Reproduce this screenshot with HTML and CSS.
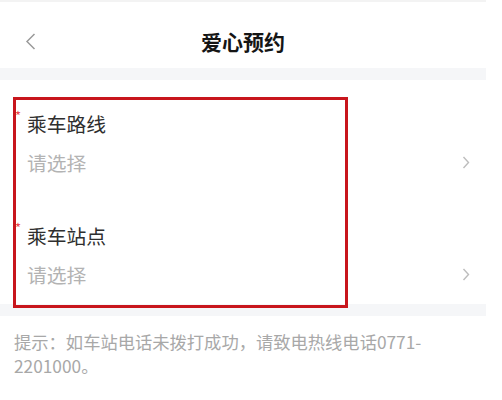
FILE: index.html
```html
<!DOCTYPE html>
<html lang="zh-CN">
<head>
  <meta charset="UTF-8" />
  <meta name="viewport" content="width=device-width, initial-scale=1.0">
  <title>爱心预约</title>
  <link rel="stylesheet" href="styles.css">
</head>

<body>
  <div class="page">
    <div class="header">
      <div class="back">
        <svg width="11" height="17" viewBox="0 0 11 17">
          <polyline points="9.5,1 2,8.5 9.5,16" fill="none" stroke="#9a9a9a" stroke-width="1.5" />
        </svg>
      </div>
      <h2 class="titulo">爱心预约</h2>
      <div></div>
    </div>

    <div class="separador"></div>

    <div class="form">
      <div class="campo">
        <div class="etiqueta"><span class="req">*</span>乘车路线</div>
        <div class="valor">
          <span>请选择</span>
          <svg width="8" height="13" viewBox="0 0 8 13">
            <polyline points="1.5,1 6.5,6.5 1.5,12" fill="none" stroke="#bdbdbd" stroke-width="1.4" />
          </svg>
        </div>
      </div>
      <div class="campo">
        <div class="etiqueta"><span class="req">*</span>乘车站点</div>
        <div class="valor">
          <span>请选择</span>
          <svg width="8" height="13" viewBox="0 0 8 13">
            <polyline points="1.5,1 6.5,6.5 1.5,12" fill="none" stroke="#bdbdbd" stroke-width="1.4" />
          </svg>
        </div>
      </div>
      <div class="marca"></div>
    </div>

    <div class="separador"></div>

    <p class="aviso">提示：如车站电话未拨打成功，请致电热线电话0771-<wbr>2201000。</p>
  </div>
</body>
</html>
```

FILE: styles.css
```css
body {
  background-color: white;
  font-family: "Noto Sans CJK SC", "Noto Sans", sans-serif;
  margin: 0;
  padding: 0;
}

.page {
  width: 486px;
  border-top: 2px solid #f3f3f3;
}

.header {
  display: grid;
  grid-template-columns: 60px 1fr 60px;
  align-items: center;
  height: 66px;
  padding-top: 12px;
  box-sizing: border-box;
}

.back {
  padding-left: 25px;
  display: flex;
  align-items: center;
}

.titulo {
  margin: 0;
  text-align: center;
  color: #151515;
  font-size: 21px;
  font-weight: bold;
  line-height: 30px;
}

.separador {
  height: 12px;
  background-color: #f5f6f8;
}

.form {
  position: relative;
}

.campo {
  padding: 24px 16px 12px 15px;
}

.etiqueta {
  display: flex;
  height: 40px;
  line-height: 40px;
  font-size: 19.8px;
  color: #2e2e2e;
}

.req {
  width: 12px;
  font-size: 13px;
  line-height: 24px;
  color: #e8474b;
}

.valor {
  display: flex;
  justify-content: space-between;
  align-items: center;
  height: 36px;
  padding-left: 12px;
  font-size: 19.8px;
  color: #b3b3b3;
}

.marca {
  position: absolute;
  left: 13px;
  top: 17px;
  width: 335px;
  height: 211px;
  border: 3px solid #c8161d;
  box-sizing: border-box;
}

.aviso {
  margin: 0;
  padding: 14px 14px;
  font-size: 17.3px;
  line-height: 24px;
  color: #a8a8a8;
}
```
